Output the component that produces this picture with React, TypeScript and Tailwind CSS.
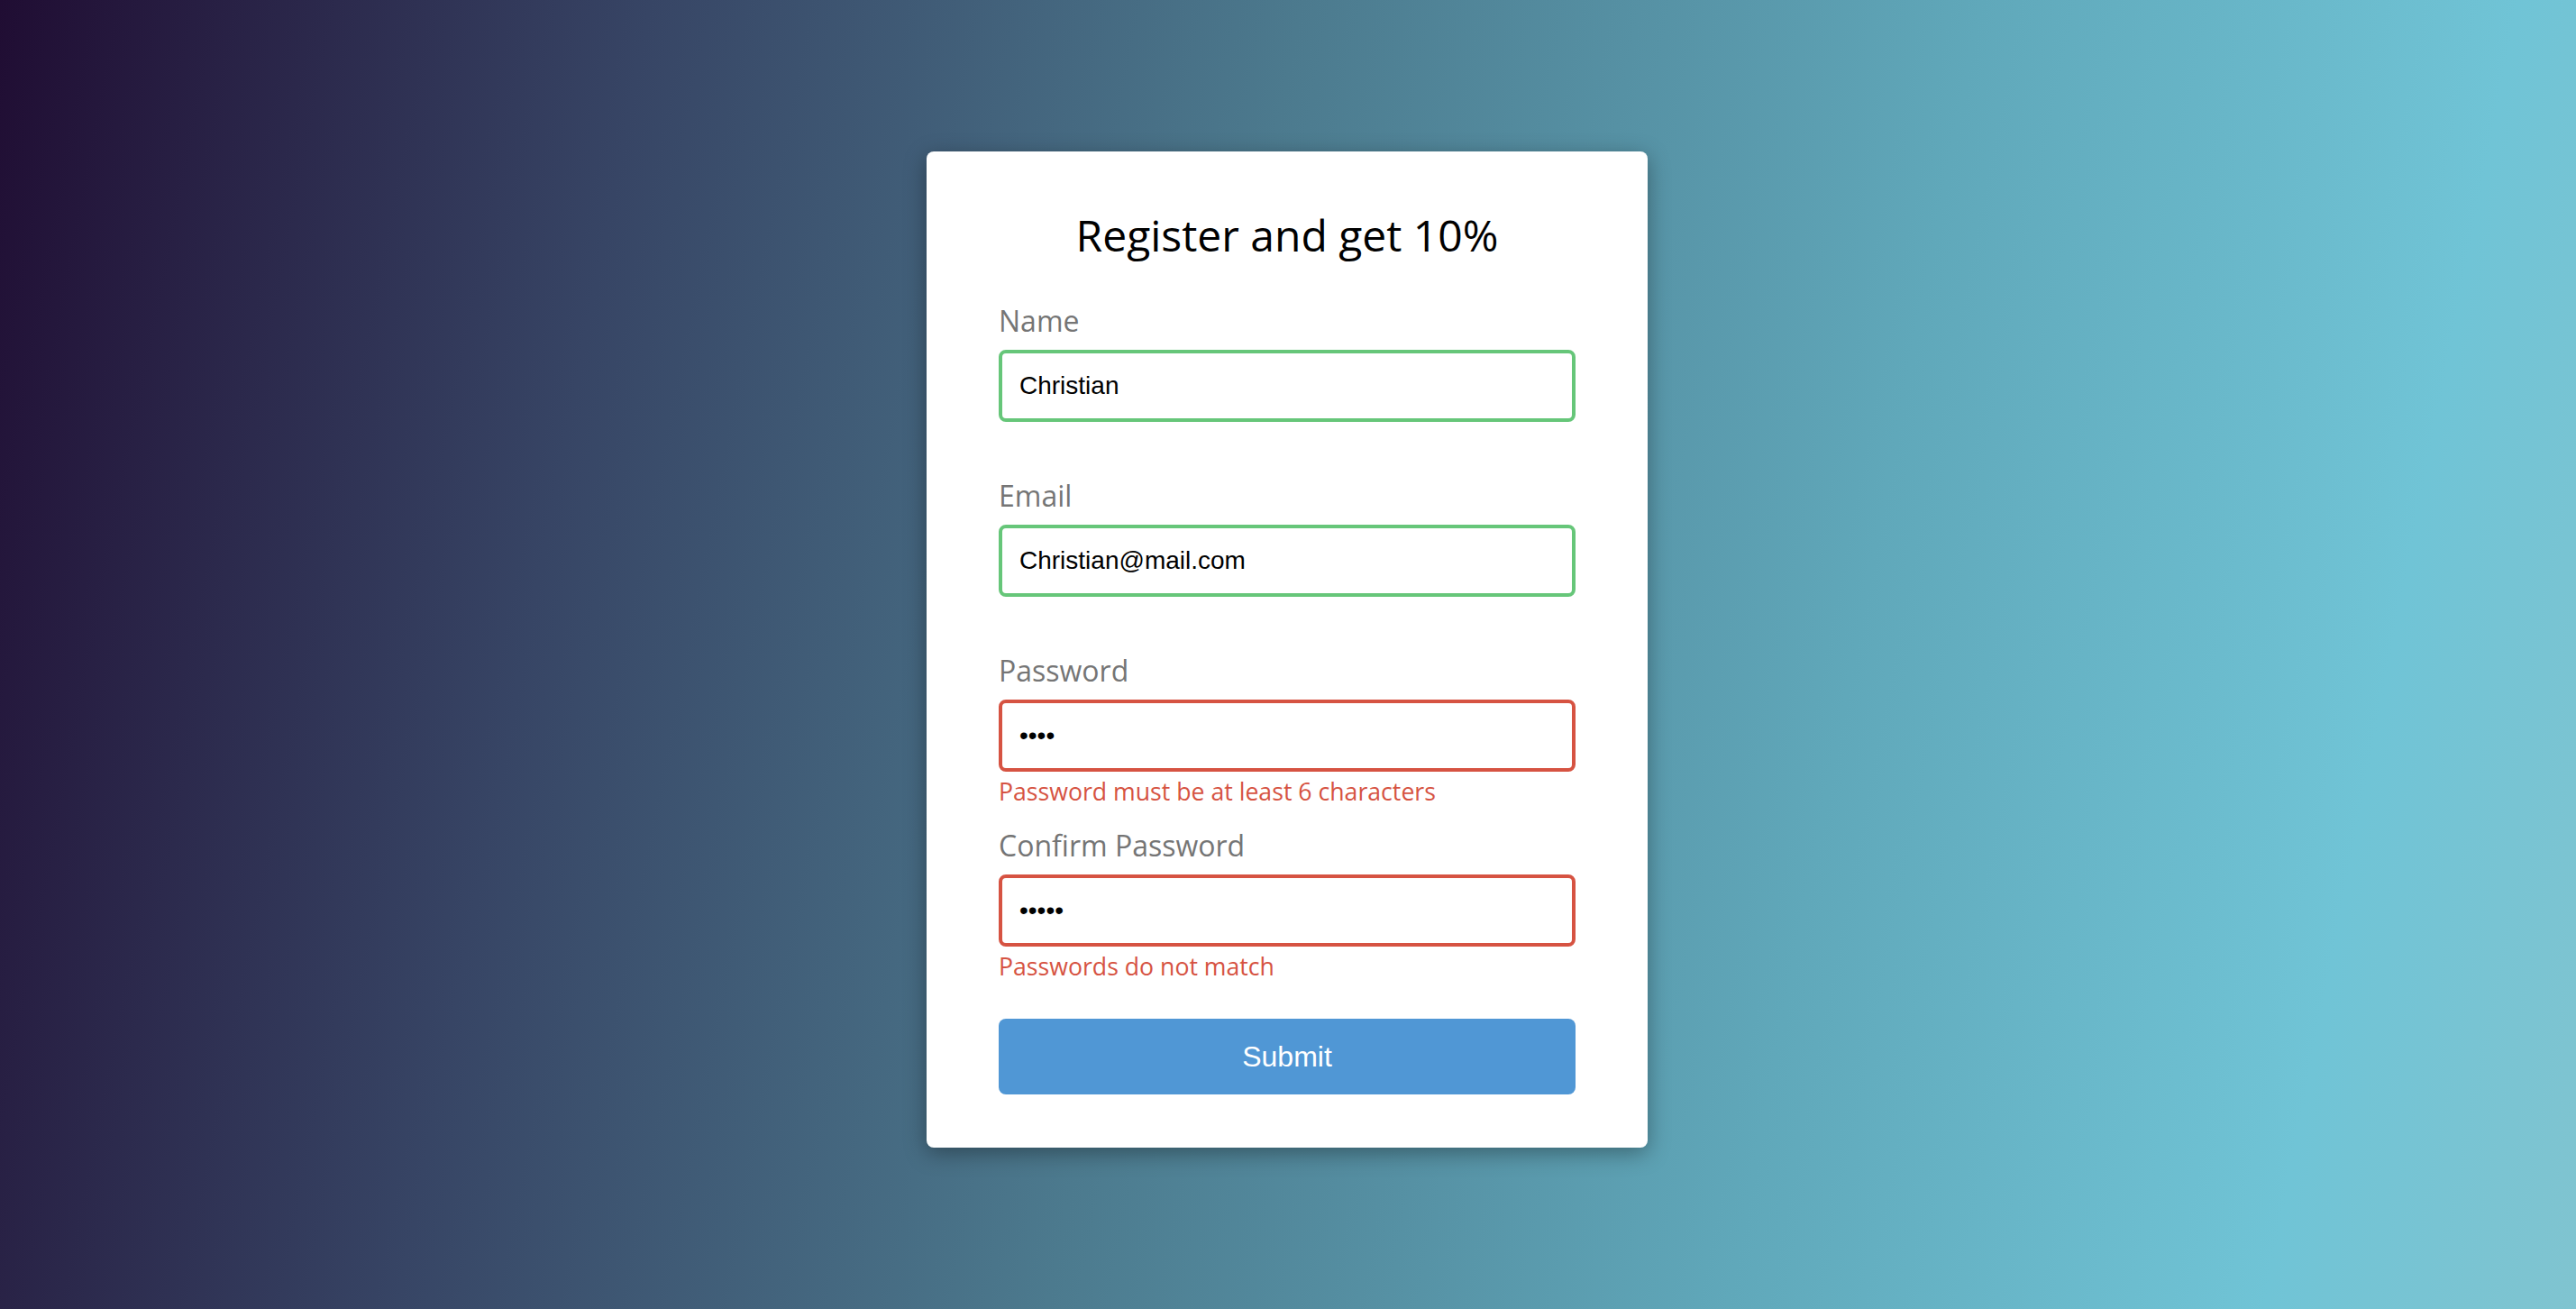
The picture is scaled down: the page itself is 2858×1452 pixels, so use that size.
import { useState } from 'react';

interface FieldProps {
  label: string;
  type: string;
  value: string;
  error?: string;
  valid: boolean;
}

const Field: React.FC<FieldProps> = ({ label, type, value, error, valid }) => {
  const [text, setText] = useState(value);

  return (
    <div className="flex flex-col">
      <label className="text-[32px] leading-[44px] text-[#757575] mb-[10px]">
        {label}
      </label>
      <input
        type={type}
        value={text}
        onChange={(e) => setText(e.target.value)}
        className={`h-[80px] w-full rounded-[8px] border-[4px] px-[19px] text-[28px] text-black outline-none font-['Liberation_Sans',Arial,sans-serif] ${
          valid ? 'border-[#66c679]' : 'border-[#d65342]'
        }`}
      />
      {/* ERROR */}
      <div className="h-[60px] pt-[3px]">
        {error && (
          <span className="text-[26.67px] leading-[38px] text-[#d65342]">
            {error}
          </span>
        )}
      </div>
    </div>
  );
};

const App: React.FC = () => {
  return (
    <div className="min-h-screen w-full pt-[168px] bg-[linear-gradient(101deg,#200d33_0%,#374565_23%,#4c7a8e_46%,#60a8ba_70%,#70c4d6_89%,#80c4d0_100%)] font-['Open_Sans',sans-serif]">
      <form
        onSubmit={(e) => e.preventDefault()}
        className="mx-auto w-[800px] -translate-x-[1px] rounded-[8px] bg-white px-[80px] pt-[61px] pb-[59px] shadow-[0_6px_24px_rgba(0,0,0,0.35)]"
      >
        <h2 className="text-center text-[48px] leading-[64px] text-black mb-[41px]">
          Register and get 10%
        </h2>
        <Field label="Name" type="text" value="Christian" valid />
        <Field label="Email" type="email" value="Christian@mail.com" valid />
        <Field
          label="Password"
          type="password"
          value="abcd"
          valid={false}
          error="Password must be at least 6 characters"
        />
        <Field
          label="Confirm Password"
          type="password"
          value="abcde"
          valid={false}
          error="Passwords do not match"
        />
        <button
          type="submit"
          className="mt-[20px] flex h-[84px] w-full items-center justify-center rounded-[8px] bg-[#5097d5] text-[32px] text-white font-['Liberation_Sans',Arial,sans-serif]"
        >
          Submit
        </button>
      </form>
    </div>
  );
};

export default App;
